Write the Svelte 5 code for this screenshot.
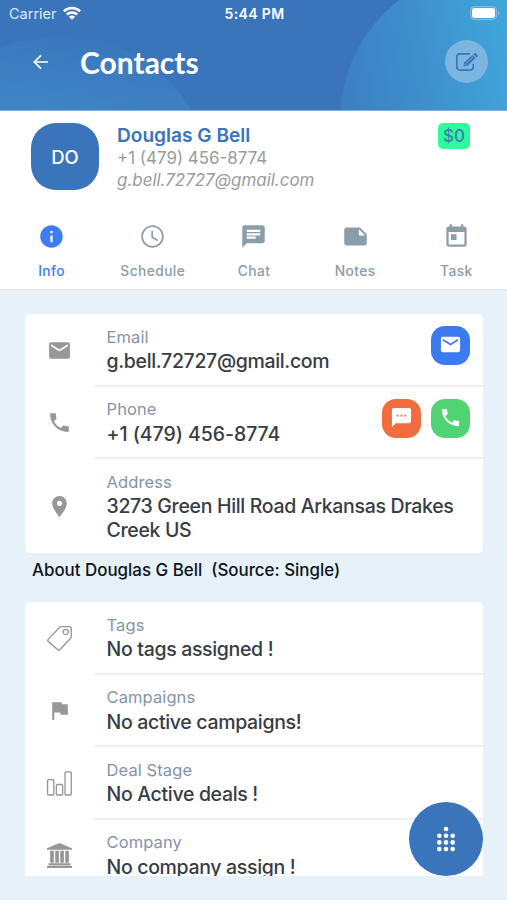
<!--
Contact detail screen: header, contact summary, section tabs and info cards.

@component
-->
<script lang="ts">
	type IconName = keyof typeof paths;

	interface Row {
		icon: IconName;
		label: string;
		value: string;
		numeric?: boolean;
		actions?: { icon: IconName; tone: 'blue' | 'orange' | 'green'; label: string }[];
	}

	const paths = {
		info: 'M12 2C6.48 2 2 6.48 2 12s4.48 10 10 10 10-4.48 10-10S17.52 2 12 2zm1 15h-2v-6h2v6zm0-8h-2V7h2v2z',
		clock:
			'M11.99 2C6.47 2 2 6.48 2 12s4.47 10 9.99 10C17.52 22 22 17.52 22 12S17.52 2 11.99 2zM12 20.4c-4.64 0-8.4-3.76-8.4-8.4S7.36 3.6 12 3.6s8.4 3.76 8.4 8.4-3.76 8.4-8.4 8.4zM12.5 7H11v6l5.25 3.15.75-1.23-4.5-2.67z',
		chat: 'M20 2H4c-1.1 0-1.99.9-1.99 2L2 22l4-4h14c1.1 0 2-.9 2-2V4c0-1.1-.9-2-2-2zM6 9h12v2H6V9zm8 5H6v-2h8v2zm4-6H6V6h12v2z',
		note: 'M3.99 4C2.9 4 2 4.9 2 6v12c0 1.1.9 2 2 2h16c1.1 0 2-.9 2-2V10l-6-6H3.99zM15 11V5.5l5.5 5.5H15z',
		event:
			'M19 3h-1V1h-2v2H8V1H6v2H5c-1.11 0-1.99.9-1.99 2L3 19c0 1.1.89 2 2 2h14c1.1 0 2-.9 2-2V5c0-1.1-.9-2-2-2zm0 16H5V8h14v11zM7 10h5v5H7z',
		mail: 'M20 4H4c-1.1 0-1.99.9-1.99 2L2 18c0 1.1.9 2 2 2h16c1.1 0 2-.9 2-2V6c0-1.1-.9-2-2-2zm0 4l-8 5-8-5V6l8 5 8-5v2z',
		phone:
			'M6.62 10.79c1.44 2.83 3.76 5.14 6.59 6.59l2.2-2.2c.27-.27.67-.36 1.02-.24 1.12.37 2.33.57 3.57.57.55 0 1 .45 1 1V20c0 .55-.45 1-1 1-9.39 0-17-7.61-17-17 0-.55.45-1 1-1h3.5c.55 0 1 .45 1 1 0 1.25.2 2.45.57 3.57.11.35.03.74-.25 1.02l-2.2 2.2z',
		place:
			'M12 2C8.13 2 5 5.13 5 9c0 5.25 7 13 7 13s7-7.75 7-13c0-3.87-3.13-7-7-7zm0 9.5c-1.38 0-2.5-1.12-2.5-2.5s1.12-2.5 2.5-2.5 2.5 1.12 2.5 2.5-1.12 2.5-2.5 2.5z',
		sms: 'M20 2H4c-1.1 0-1.99.9-1.99 2L2 22l4-4h14c1.1 0 2-.9 2-2V4c0-1.1-.9-2-2-2zM9 11H7V9h2v2zm4 0h-2V9h2v2zm4 0h-2V9h2v2z',
		flag: 'M14.4 6L14 4H5v17h2v-7h5.6l.4 2h7V6z',
		tag: 'M13.600.600h8a1.700 1.700 0 0 1 1.700 1.700v8a2 2 0 0 1-.6 1.400L12 23a1 1 0 0 1-1.400 0L.9 14.500a1 1 0 0 1 0-1.400L12.200 1.200A2 2 0 0 1 13.600.600zM20.500 5.800a2.500 2.500 0 1 1-5 0 2.500 2.500 0 0 1 5 0z',
		bars: 'M1.500 8.300h4a1 1 0 0 1 1 1V22a1 1 0 0 1-1 1h-4a1 1 0 0 1-1-1V9.300a1 1 0 0 1 1-1zM10 13h4a1 1 0 0 1 1 1v8a1 1 0 0 1-1 1h-4a1 1 0 0 1-1-1v-8a1 1 0 0 1 1-1zM18.300.800h4a1 1 0 0 1 1 1V22a1 1 0 0 1-1 1h-4a1 1 0 0 1-1-1V1.800a1 1 0 0 1 1-1z',
		bank: 'M12 0L24 5v1.500H0V5zM3 7.500h3.600V19H3zM7.900 7.500h3.500V19H7.900zM12.700 7.500h3.500V19h-3.500zM17.500 7.500H21V19h-3.500zM1.500 19.400h21v1.900h-21zM0 21.900h24V24H0z'
	};

	const outlined: IconName[] = ['tag', 'bars'];

	const tabs: { icon: IconName; label: string }[] = [
		{ icon: 'info', label: 'Info' },
		{ icon: 'clock', label: 'Schedule' },
		{ icon: 'chat', label: 'Chat' },
		{ icon: 'note', label: 'Notes' },
		{ icon: 'event', label: 'Task' }
	];

	const contactRows: Row[] = [
		{
			icon: 'mail',
			label: 'Email',
			value: 'g.bell.72727@gmail.com',
			actions: [{ icon: 'mail', tone: 'blue', label: 'Send email' }]
		},
		{
			icon: 'phone',
			label: 'Phone',
			value: '+1 (479) 456-8774',
			numeric: true,
			actions: [
				{ icon: 'sms', tone: 'orange', label: 'Send message' },
				{ icon: 'phone', tone: 'green', label: 'Call' }
			]
		},
		{ icon: 'place', label: 'Address', value: '3273 Green Hill Road Arkansas Drakes Creek US' }
	];

	const aboutRows: Row[] = [
		{ icon: 'tag', label: 'Tags', value: 'No tags assigned !' },
		{ icon: 'flag', label: 'Campaigns', value: 'No active campaigns!' },
		{ icon: 'bars', label: 'Deal Stage', value: 'No Active deals !' },
		{ icon: 'bank', label: 'Company', value: 'No company assign !' }
	];

	// Launcher glyph: one dot above a 3x3 grid
	const dots = [
		[12, 3],
		...[9.7, 16.400, 23.100].flatMap((y) => [5.300, 12, 18.700].map((x) => [x, y]))
	];

	let activeTab = $state('Info');
</script>

{#snippet icon(name: IconName)}
	<svg
		class="icon icon--{name}"
		class:icon--outlined={outlined.includes(name)}
		viewBox="0 0 24 24"
		aria-hidden="true"
	>
		<path d={paths[name]} />
	</svg>
{/snippet}

{#snippet card(rows: Row[])}
	<div class="card">
		{#each rows as row (row.label)}
			<div class="row">
				<div class="row__icon">{@render icon(row.icon)}</div>
				<div class="row__body">
					<div class="row__text">
						<div class="row__label">{row.label}</div>
						<div class="row__value" class:row__value--numeric={row.numeric}>{row.value}</div>
					</div>
					{#if row.actions}
						<div class="row__actions">
							{#each row.actions as action (action.label)}
								<button class="action action--{action.tone}" aria-label={action.label}>
									{@render icon(action.icon)}
								</button>
							{/each}
						</div>
					{/if}
				</div>
			</div>
		{/each}
	</div>
{/snippet}

<div class="screen">
	<header class="header">
		<svg class="header__art" viewBox="0 0 507 110" preserveAspectRatio="none" aria-hidden="true">
			<defs>
				<linearGradient id="glow-right" gradientUnits="userSpaceOnUse" x1="340" y1="80" x2="507" y2="50">
					<stop offset="0" stop-color="#3c7fc3" />
					<stop offset="0.5" stop-color="#3e90cd" />
					<stop offset="1" stop-color="#40a5da" />
				</linearGradient>
				<linearGradient id="glow-left" gradientUnits="userSpaceOnUse" x1="75" y1="35" x2="60" y2="115">
					<stop offset="0" stop-color="#3b77bc" />
					<stop offset="1" stop-color="#3d85c6" />
				</linearGradient>
			</defs>
			<circle cx="60" cy="190" r="154" fill="url(#glow-left)" />
			<circle cx="491" cy="120" r="151" fill="url(#glow-right)" />
		</svg>

		<div class="status">
			<div class="status__carrier">
				<span>Carrier</span>
				<svg width="18" height="14" viewBox="0 0 18 14" aria-hidden="true">
					<g fill="none" stroke="#fff" stroke-width="2.500">
						<path d="M.9 5.300a11.500 11.500 0 0 1 16.200 0" />
						<path d="M3.900 8.500a7.200 7.200 0 0 1 10.200 0" />
					</g>
					<path d="M9 13.800L5.900 10.700a4.400 4.400 0 0 1 6.200 0z" fill="#fff" />
				</svg>
			</div>
			<div class="status__time">5:44 PM</div>
			<svg class="status__battery" width="30" height="14" viewBox="0 0 30 14" aria-hidden="true">
				<rect x=".6" y=".6" width="25.800" height="12.800" rx="3.800" fill="none" stroke="#82b9e1" stroke-width="1.200" />
				<rect x="2" y="2" width="23" height="10" rx="2.300" fill="#fff" />
				<path d="M27.800 4.800c2 .6 2 3.800 0 4.400z" fill="#82b9e1" />
			</svg>
		</div>

		<div class="bar">
			<button class="bar__back" aria-label="Back">
				<svg width="16" height="16" viewBox="0 0 16 16" aria-hidden="true">
					<path d="M15 8H1.500M8 1.300L1.300 8 8 14.700" fill="none" stroke="#fff" stroke-width="1.700" />
				</svg>
			</button>
			<h1 class="bar__title">Contacts</h1>
			<button class="bar__edit" aria-label="Edit contact">
				<svg width="24" height="20" viewBox="0 0 24 20" aria-hidden="true">
					<path
						d="M15 1.900H4.800A3 3 0 0 0 1.800 4.900v10.200a3 3 0 0 0 3 3h10.400a3 3 0 0 0 3-3V12"
						fill="none"
						stroke="#3a76b9"
						stroke-width="1.700"
					/>
					<path d="M8.300 14.500l1-4L17.400 3l3.100 3.100-8 7.700z" fill="#3a76b9" />
					<path d="M18.300 2.200l.8-.8c.6-.5 1.200-.5 1.800 0l1.500 1.500c.4.5.4 1.200 0 1.700l-1 .9z" fill="#3a76b9" />
					<path d="M11.300 11.300l6.700-6.300M9.600 11.800l1.600 1.600" stroke="#86b9e1" stroke-width=".8" />
				</svg>
			</button>
		</div>
	</header>

	<section class="contact">
		<div class="contact__avatar">DO</div>
		<div class="contact__details">
			<div class="contact__name">Douglas G Bell</div>
			<div class="contact__phone">+1 (479) 456-8774</div>
			<div class="contact__email">g.bell.72727@gmail.com</div>
		</div>
		<div class="contact__balance">$0</div>
	</section>

	<nav class="tabs">
		{#each tabs as tab (tab.label)}
			<button
				class="tab"
				class:tab--active={activeTab === tab.label}
				onclick={() => (activeTab = tab.label)}
			>
				{@render icon(tab.icon)}
				<span>{tab.label}</span>
			</button>
		{/each}
	</nav>

	<main class="content">
		{@render card(contactRows)}
		<h2 class="content__heading">About Douglas G Bell&nbsp; (Source: Single)</h2>
		{@render card(aboutRows)}
	</main>

	<button class="launcher" aria-label="Open menu">
		<svg width="24" height="26" viewBox="0 0 24 26" aria-hidden="true">
			{#each dots as [cx, cy]}
				<circle {cx} {cy} r="2.300" fill="#fff" />
			{/each}
		</svg>
	</button>
</div>

<style>
	:global(body) {
		margin: 0;
	}

	.screen {
		position: relative;
		display: flex;
		flex-direction: column;
		width: 507px;
		height: 900px;
		overflow: hidden;
		background: #e6f1fa;
		font-family: Inter, 'Liberation Sans', sans-serif;
	}

	button {
		padding: 0;
		border: 0;
		background: none;
		font: inherit;
	}

	.icon {
		display: block;
		flex-shrink: 0;
		fill: currentColor;
	}

	.icon--outlined {
		overflow: visible;
		fill: none;
		stroke: currentColor;
		stroke-width: 1.3;
	}

	/* Header */
	.header {
		position: relative;
		flex-shrink: 0;
		height: 111px;
		box-sizing: border-box;
		border-bottom: 1px solid #86b0dc;
		background: #3a74ba;
		color: #fff;
	}

	.header__art {
		position: absolute;
		inset: 0;
		width: 100%;
		height: 100%;
	}

	.status {
		position: relative;
		display: grid;
		grid-template-columns: 1fr auto 1fr;
		align-items: center;
		height: 26px;
		padding: 0 7px 0 9px;
		font-size: 14.5px;
	}

	.status__carrier {
		display: flex;
		align-items: center;
		gap: 6px;
		color: #dcebf8;
	}

	.status__time {
		font-size: 14px;
		font-weight: 600;
		letter-spacing: 0.35px;
	}

	.status__battery {
		justify-self: end;
	}

	.bar {
		position: relative;
		display: flex;
		align-items: center;
		height: 71px;
		padding: 0 19px 0 33px;
	}

	.bar__back {
		display: flex;
		width: 47px;
	}

	.bar__title {
		flex: 1;
		margin: 1px 0 0;
		font: 700 30px/36px Lato, sans-serif;
	}

	.bar__edit {
		display: flex;
		align-items: center;
		justify-content: center;
		width: 43px;
		height: 43px;
		border-radius: 50%;
		background: #7cb6e0;
	}

	/* Contact summary */
	.contact {
		display: flex;
		flex-shrink: 0;
		height: 100px;
		padding: 12px 37px 0 31px;
		box-sizing: border-box;
		background: #fff;
	}

	.contact__avatar {
		display: flex;
		align-items: center;
		justify-content: center;
		width: 68px;
		height: 67px;
		border-radius: 25px;
		background: #3a74ba;
		color: #fff;
		font-size: 18.5px;
		font-weight: 500;
	}

	.contact__details {
		flex: 1;
		padding-left: 18px;
		color: #9b9b9b;
		font-size: 16.95px;
		line-height: 22px;
	}

	.contact__name {
		height: 24px;
		color: #3a74ba;
		font-size: 19.1px;
		font-weight: 600;
		line-height: 25px;
	}

	.contact__email {
		font-style: italic;
	}

	.contact__balance {
		width: 32px;
		height: 26px;
		border-radius: 5px;
		background: #2efb9c;
		color: #3a7fa9;
		font-size: 17px;
		font-weight: 500;
		line-height: 26px;
		text-align: center;
	}

	/* Tabs */
	.tabs {
		display: grid;
		grid-template-columns: repeat(5, 1fr);
		flex-shrink: 0;
		height: 79px;
		padding-left: 1px;
		box-sizing: border-box;
		border-bottom: 1px solid #e3e8ec;
		background: #fff;
	}

	.tab {
		display: flex;
		flex-direction: column;
		align-items: center;
		gap: 11px;
		padding-top: 12px;
		color: #8b9da8;
		font-size: 13.8px;
		font-weight: 500;
		line-height: 20px;
		letter-spacing: 0.4px;
	}

	.tab .icon {
		width: 27px;
		height: 27px;
	}

	.tab--active {
		color: #3d7cf2;
	}

	/* Cards */
	.content {
		flex: none;
		height: 562px;
		margin-top: 24px;
		padding: 0 24px 0 25px;
		overflow: hidden;
	}

	.content__heading {
		margin: 0;
		padding: 5px 7px 19px;
		color: #0d1318;
		font-size: 16.9px;
		font-weight: 500;
		line-height: 25px;
	}

	.card {
		overflow: hidden;
		border-radius: 5px;
		background: #fff;
	}

	.row {
		display: flex;
	}

	.row__icon {
		display: flex;
		align-items: center;
		justify-content: center;
		width: 69px;
		color: #979797;
	}

	.row__icon .icon {
		width: 25px;
		height: 25px;
	}

	.row__body {
		display: flex;
		flex: 1;
		justify-content: space-between;
		min-height: 72.5px;
		padding: 10.5px 13px 0 12.5px;
		box-sizing: border-box;
		border-bottom: 2px solid #eef0f1;
	}

	.row:last-child .row__body {
		border-bottom: 0;
	}

	.row__text {
		flex: 1;
		margin-right: -10px;
		padding-bottom: 11px;
	}

	.row__label {
		height: 24.5px;
		color: #8494a7;
		font-size: 16.5px;
		line-height: 24px;
		letter-spacing: 0.1px;
	}

	.row__value {
		color: #373c45;
		font-size: 19.5px;
		font-weight: 500;
		line-height: 24px;
		letter-spacing: -0.33px;
	}

	.row__value--numeric {
		letter-spacing: -0.05px;
	}

	.row__actions {
		display: flex;
		gap: 10px;
		padding-top: 1.5px;
	}

	.action {
		display: flex;
		justify-content: center;
		width: 39px;
		height: 39px;
		padding-top: 7px;
		box-sizing: border-box;
		border-radius: 14px;
		color: #fff;
	}

	.action .icon {
		width: 23px;
		height: 23px;
	}

	.action--blue {
		background: #3c7af0;
	}

	.action--orange {
		background: #f26d3d;
	}

	.action--green {
		background: #50d373;
	}

	.launcher {
		position: absolute;
		right: 24px;
		bottom: 24px;
		display: flex;
		align-items: center;
		justify-content: center;
		width: 74px;
		height: 74px;
		border-radius: 50%;
		background: #3a74ba;
	}
</style>
